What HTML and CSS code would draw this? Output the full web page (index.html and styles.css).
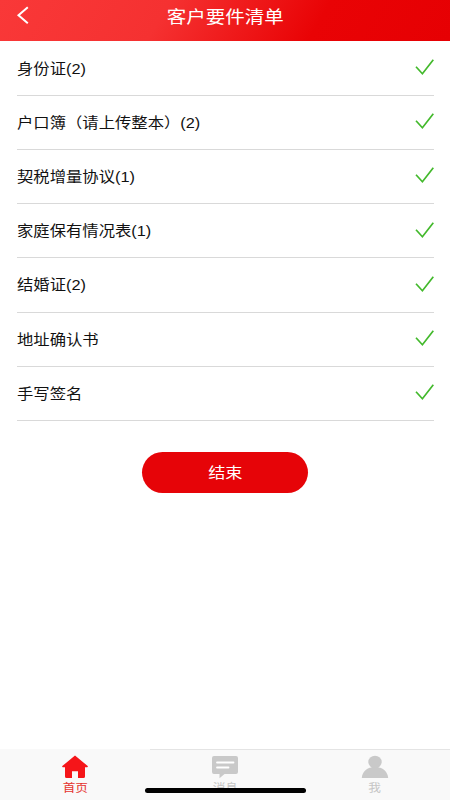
FILE: index.html
```html
<!DOCTYPE html>
<html lang="zh-CN">
<head>
<meta charset="utf-8">
<title>客户要件清单</title>
<link rel="stylesheet" href="styles.css">
</head>
<body>
<svg class="defs" aria-hidden="true">
  <symbol id="check" viewBox="0 0 20 18"><path d="M1 7.8 7.4 14.8 18.3 .8"/></symbol>
</svg>
<div class="app">
  <header class="header">
    <svg class="back" viewBox="0 0 14 20"><path d="M11.8 1.200 2.500 9.200 11.8 17.200"/></svg>
    <h1 class="title"><span class="wide">客户要件清单</span></h1>
  </header>
  <main class="main">
    <ul class="list">
      <li class="row"><span class="wide">身份证(2)</span><svg class="check"><use href="#check"/></svg></li>
      <li class="row"><span class="wide">户口簿（请上传整本）(2)</span><svg class="check"><use href="#check"/></svg></li>
      <li class="row"><span class="wide">契税增量协议(1)</span><svg class="check"><use href="#check"/></svg></li>
      <li class="row"><span class="wide">家庭保有情况表(1)</span><svg class="check"><use href="#check"/></svg></li>
      <li class="row"><span class="wide">结婚证(2)</span><svg class="check"><use href="#check"/></svg></li>
      <li class="row"><span class="wide">地址确认书</span><svg class="check"><use href="#check"/></svg></li>
      <li class="row"><span class="wide">手写签名</span><svg class="check"><use href="#check"/></svg></li>
    </ul>
    <button class="finish"><span class="wide">结束</span></button>
  </main>
  <nav class="tabs">
    <a class="tab active">
      <svg class="icon" viewBox="0 0 28 24"><path d="M14 .5 27 11.3 26.3 12.3H24V21.5Q24 23 22.500 23H17V16.300H11V23H5.500Q4 23 4 21.500V12.300H1.700L1 11.300Z"/></svg>
      <span class="wide">首页</span>
    </a>
    <a class="tab">
      <svg class="icon" viewBox="0 0 28 24"><path d="M3 1H25Q27 1 27 3V17Q27 19 25 19H13.500L8.500 23.300V19H3Q1 19 1 17V3Q1 1 3 1Z"/><path class="lines" d="M6 7.500H22.500M6 12.500H17.500"/></svg>
      <span class="wide">消息</span>
    </a>
    <a class="tab">
      <svg class="icon" viewBox="0 0 28 24"><ellipse cx="14" cy="7" rx="6.700" ry="6.200"/><path d="M10.500 11H17.500V12.500C22.500 13 26.800 17 27.200 23H.8C1.200 17 5.500 13 10.500 12.500Z"/></svg>
      <span class="wide">我</span>
    </a>
    <div class="home-bar"></div>
  </nav>
</div>
</body>
</html>
```
FILE: styles.css
```css
* { box-sizing: border-box; }
body {
  margin: 0;
  background: #fff;
  font-family: "Liberation Sans", "Noto Sans CJK SC", sans-serif;
  color: #111;
}
.defs { position: absolute; width: 0; height: 0; }
.app { display: flex; flex-direction: column; height: 800px; overflow: hidden; }
.wide { display: inline-block; white-space: nowrap; transform: scaleX(1.12); }

.header {
  display: grid;
  grid-template-columns: 60px 1fr 60px;
  align-items: center;
  height: 41.4px;
  padding-bottom: 8px;
  flex: none;
  background: linear-gradient(120deg, #f93838 0%, #f53131 36%, #e90305 70%, #e60003 100%);
}
.back { width: 14px; height: 20px; margin: 0 0 1px 16px; fill: none; stroke: #fff; stroke-width: 2; }
.title { margin: 0; text-align: center; font-size: 17.4px; line-height: 24px; font-weight: 400; color: #fff; }

.main { flex: 1; display: flex; flex-direction: column; align-items: center; }
.list { list-style: none; width: 417px; margin: 0; padding: 0; }
.row {
  display: flex;
  align-items: center;
  justify-content: space-between;
  height: 54.24px;
  padding-top: 1px;
  border-bottom: 1px solid #d9d9d9;
  font-size: 14.4px;
  line-height: 22px;
}
.row .wide { transform-origin: left center; transform: scaleX(1.135); }
.check { width: 20px; height: 18px; margin: 0 -1px 1px 0; fill: none; stroke: #43b92c; stroke-width: 1.7; }
.finish {
  width: 166px;
  height: 41px;
  margin: 31px 0 0;
  padding: 0;
  border: 0;
  border-radius: 21px;
  background: #e60408;
  color: #fff;
  font-family: inherit;
  font-size: 15.3px;
  line-height: 24px;
}

.tabs {
  position: relative;
  display: grid;
  grid-template-columns: repeat(3, 1fr);
  height: 51px;
  flex: none;
  background: #f9f9f9;
}
.tab {
  display: flex;
  flex-direction: column;
  align-items: center;
  padding-top: 5px;
  border-top: 1px solid #e4e4e4;
  color: #c5c5c5;
  font-size: 11.3px;
  line-height: 18px;
}
.tab.active { color: #e5332e; border-top-color: #f9f9f9; }
.icon { width: 28px; height: 24px; fill: #c9c9c9; }
.active .icon { fill: #f51519; }
.lines { fill: none; stroke: #fff; stroke-width: 1.8; stroke-linecap: round; }
.home-bar { position: absolute; left: 145px; top: 39px; width: 161px; height: 5px; border-radius: 3px; background: #000; }
```
